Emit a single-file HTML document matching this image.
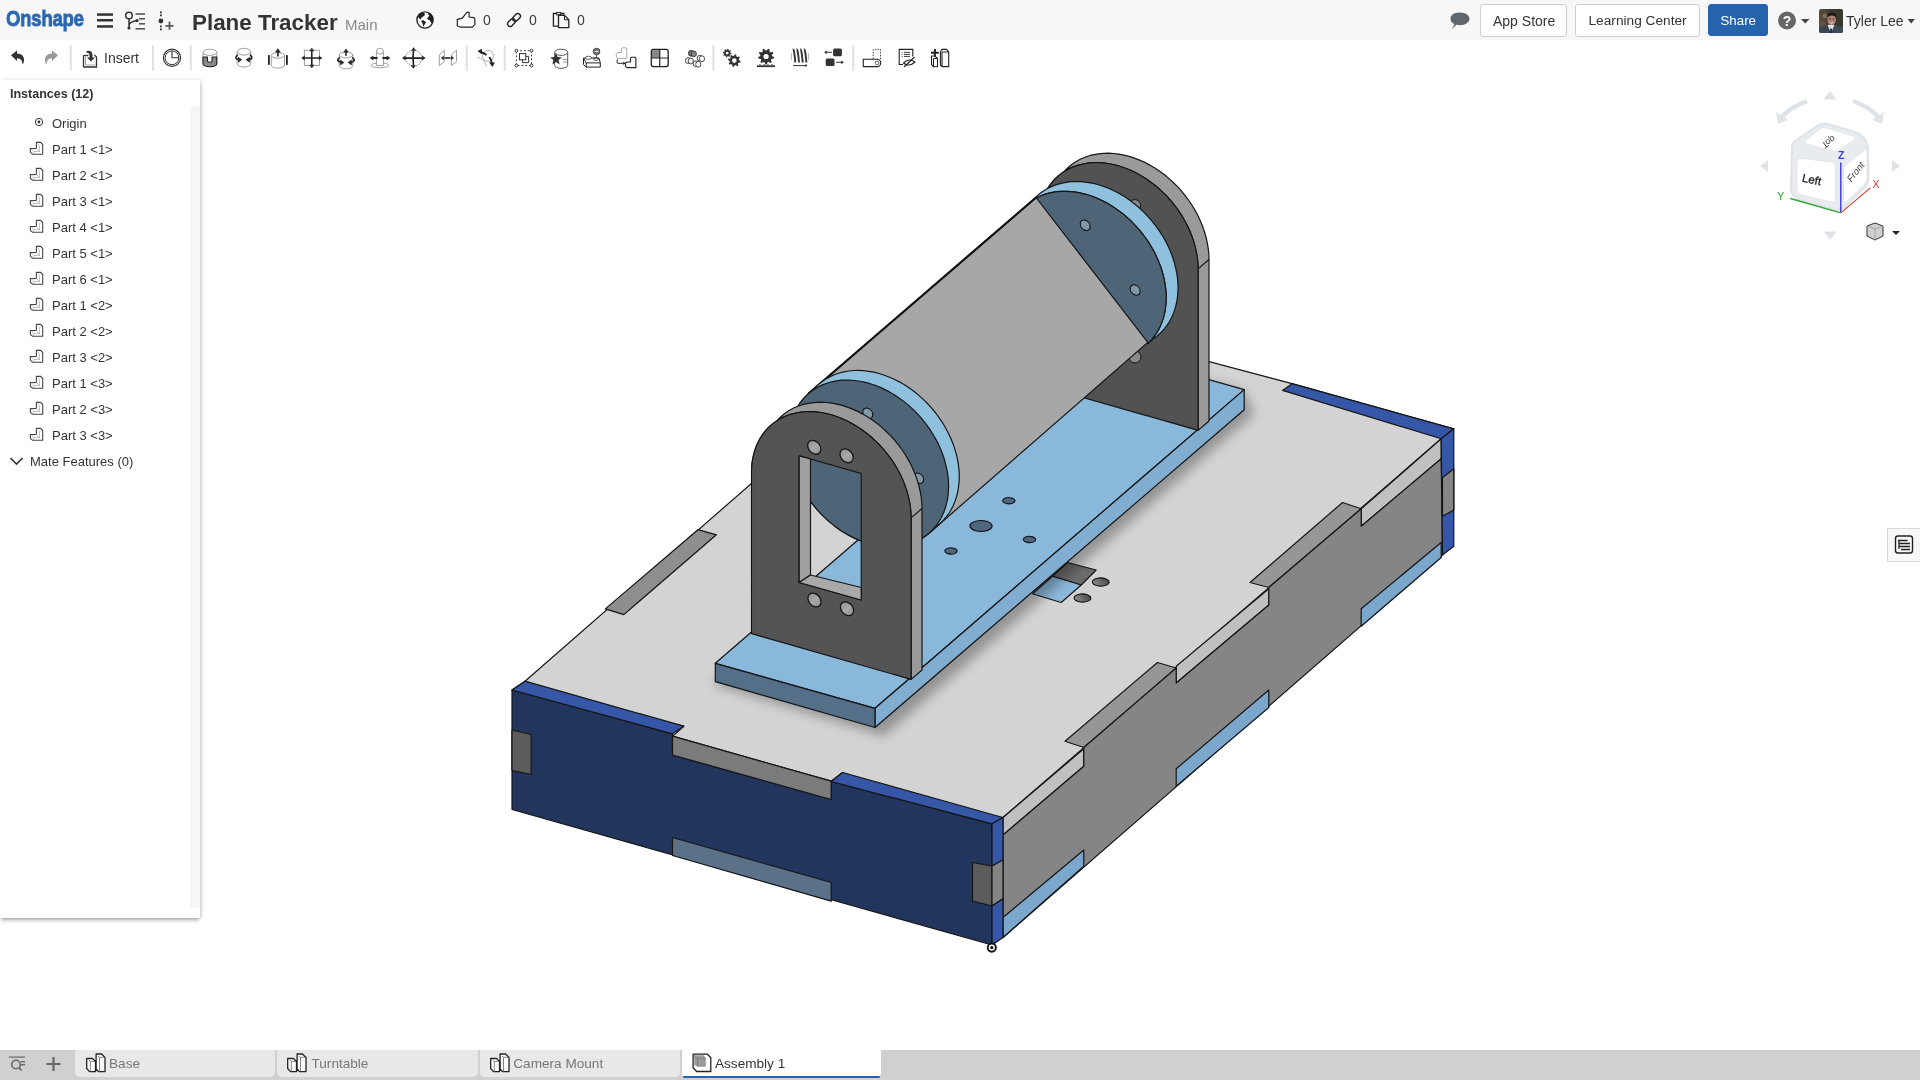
<!DOCTYPE html>
<html><head><meta charset="utf-8"><style>
*{margin:0;padding:0;box-sizing:border-box}
body{width:1920px;height:1080px;overflow:hidden;background:#fff;font-family:"Liberation Sans",sans-serif;position:relative;color:#333;-webkit-font-smoothing:antialiased}
.abs{will-change:transform}
.abs{position:absolute}
#hdr{left:0;top:0;width:1920px;height:40px;background:#f7f7f7}
#tb{left:0;top:40px;width:1920px;height:36px;background:#fff}
#panel{left:0;top:80px;width:200px;height:838px;background:#fff;box-shadow:0 3px 4px -1px rgba(0,0,0,0.32),2px 0 4px rgba(0,0,0,0.12)}
#tabs{left:0;top:1050px;width:1920px;height:30px;background:#d0d0d0}
.tab{position:absolute;top:0;height:27px;background:#e8e8e8;border-radius:0 0 5px 5px;font-size:13.6px;color:#777}
.tab span{position:absolute;top:6px}
.btn{position:absolute;top:3.5px;height:33px;background:#fff;border:1px solid #cfcfcf;border-radius:3px;font-size:14px;color:#333}
.btn span{position:absolute;top:8px}
.item{position:absolute;left:52px;font-size:13px;color:#333}
</style></head><body>
<div id="hdr" class="abs"><div class="abs" style="left:6px;top:6px;font-size:22.5px;font-weight:bold;color:#2b67b0;transform:scaleX(0.82);transform-origin:0 0;letter-spacing:-0.2px;-webkit-text-stroke:0.9px #2b67b0">Onshape</div>
<svg class="abs" style="left:0;top:0" width="1920" height="40"><rect x="97" y="13.3" width="16" height="2.5" fill="#333"/><rect x="97" y="19.0" width="16" height="2.5" fill="#333"/><rect x="97" y="25.2" width="16" height="2.5" fill="#333"/><circle cx="129" cy="15.5" r="3.3" fill="none" stroke="#333" stroke-width="1.5"/><path d="M129 18.8 V28 M129 26 Q129 22 137 20.6" fill="none" stroke="#333" stroke-width="1.5"/><circle cx="129" cy="28" r="1.6" fill="#333"/><circle cx="137" cy="20.6" r="1.6" fill="#333"/><rect x="135.5" y="13.2" width="9.5" height="1.6" fill="#555"/><rect x="139" y="18.0" width="6" height="1.6" fill="#555"/><rect x="139" y="23.0" width="6" height="1.6" fill="#555"/><rect x="135.5" y="28.0" width="9.5" height="1.6" fill="#555"/><rect x="160" y="11.5" width="1.8" height="1.8" fill="#333"/><rect x="160" y="14.5" width="1.8" height="1.8" fill="#333"/><rect x="160" y="25.5" width="1.8" height="1.8" fill="#333"/><rect x="160" y="28.5" width="1.8" height="1.8" fill="#333"/><circle cx="160.9" cy="21" r="2.4" fill="#333"/><path d="M165.5 25.8 H173.5 M169.5 21.8 V29.8" stroke="#555" stroke-width="1.8"/><circle cx="425" cy="20" r="8.1" fill="#fff" stroke="#222" stroke-width="1.4"/><path d="M417.6 16.2 L419.7 13.5 L422.1 12.3 L424.8 13.5 L424.6 15.5 L421.7 17.6 L420.7 19.4 L419.3 18.6 Z" fill="#222"/><path d="M421.5 20.4 L423.6 20.2 L426 22.2 L424.6 24.5 L423.4 26.9 L422.6 23.7 L421.3 21.6 Z" fill="#222"/><path d="M428.3 12.5 L431.3 13.9 L432.9 16.7 L433.3 19.2 L433 22.2 L431.9 23.7 L430.9 22.2 L429.9 20.4 L427.8 19.6 L427.2 18.2 L428.3 16.7 L429.5 15.9 L428.3 14.7 Z" fill="#222"/><path d="M457.3 19.4 L462.4 18.1 L466.6 12.7 Q468.2 11.6 469.2 12.8 L469 17 L473.8 17.6 Q474.9 18.2 474.8 19.2 V24.6 L472.3 27.2 H460.6 L457.3 25.7 Z" fill="#fff" stroke="#222" stroke-width="1.2" stroke-linejoin="round"/><g transform="translate(514,20) rotate(-45)"><rect x="-8" y="-2.6" width="8.8" height="5.2" rx="2.6" fill="none" stroke="#222" stroke-width="1.4"/><rect x="-0.8" y="-2.6" width="8.8" height="5.2" rx="2.6" fill="none" stroke="#222" stroke-width="1.4"/></g><path d="M553.4 13.5 H563.7 V26.2 H553.4 Z" fill="#f7f7f7" stroke="#222" stroke-width="1.3"/><rect x="556.6" y="12.6" width="4.2" height="2.2" fill="#f7f7f7" stroke="#222" stroke-width="1"/><path d="M558.5 15.4 H564.5 L568.8 19.8 V27.6 H558.5 Z" fill="#f7f7f7" stroke="#222" stroke-width="1.3" stroke-linejoin="round"/><path d="M564.5 15.4 V19.8 H568.8" fill="none" stroke="#222" stroke-width="1"/><path d="M1459.5 12.5 C1465.5 12.5 1469.5 15.3 1469.5 18.8 C1469.5 22.3 1465.5 25.2 1459.8 25.2 C1458.5 25.2 1457.5 25 1456.5 24.8 L1452 29 L1454.5 24 C1451.5 22.8 1450.5 21 1450.5 18.8 C1450.5 15.3 1453.8 12.5 1459.5 12.5 Z" fill="#60676d"/><circle cx="1787" cy="20.5" r="9" fill="#666"/><text x="1787" y="26" text-anchor="middle" font-family="Liberation Sans" font-weight="bold" font-size="14" fill="#fff">?</text><path d="M1801 19 H1809.5 L1805.25 23.5 Z" fill="#444"/><path d="M1907.5 19 H1915 L1911.25 23.5 Z" fill="#444"/><defs><clipPath id="avc"><rect x="1819" y="8.9" width="24" height="24" rx="2"/></clipPath><linearGradient id="avbg" x1="0" y1="0" x2="1" y2="0"><stop offset="0" stop-color="#5b4e3c"/><stop offset="0.5" stop-color="#3e3a2c"/><stop offset="1" stop-color="#35382e"/></linearGradient></defs><g clip-path="url(#avc)"><rect x="1819" y="8.9" width="24" height="24" fill="url(#avbg)"/><circle cx="1825" cy="16" r="2.5" fill="#8a7a66" opacity="0.7"/><circle cx="1823" cy="24" r="3" fill="#6e5a4a" opacity="0.6"/><path d="M1819 33 V27 Q1824 25.5 1827.5 25 L1831 33 Z" fill="#3b4650"/><path d="M1843 33 V27 Q1838 25.5 1834.5 25 L1831 33 Z" fill="#404a52"/><path d="M1827.5 25 L1831 33 L1834.5 25 Q1831 24 1827.5 25 Z" fill="#dfe4ea"/><path d="M1830.3 28.5 H1831.9 L1832.3 33 H1830 Z" fill="#1d2a55"/><ellipse cx="1831.6" cy="19.8" rx="4.3" ry="5.3" fill="#a88272"/><path d="M1827 17.5 Q1827 12.5 1831.8 12.5 Q1836.5 12.5 1836.3 17.5 Q1834.5 15.2 1831.8 15.4 Q1829 15.2 1827 17.5 Z" fill="#1e1710"/><rect x="1829" y="18.5" width="1.8" height="0.9" fill="#4a3028"/><rect x="1832.6" y="18.5" width="1.8" height="0.9" fill="#4a3028"/><path d="M1829.8 22.6 Q1831.6 23.8 1833.4 22.6" fill="none" stroke="#f0e6e0" stroke-width="0.8"/></g></svg>
<div class="abs" style="left:192px;top:9.5px;font-size:22.4px;font-weight:bold;color:#333">Plane Tracker</div>
<div class="abs" style="left:345px;top:15.5px;font-size:15px;color:#888">Main</div>
<div class="abs" style="left:482.5px;top:12px;font-size:14px;color:#3a3a3a">0</div>
<div class="abs" style="left:529px;top:12px;font-size:14px;color:#3a3a3a">0</div>
<div class="abs" style="left:577px;top:12px;font-size:14px;color:#3a3a3a">0</div>
<div class="btn" style="left:1480px;width:87px"><span style="left:12px">App Store</span></div>
<div class="btn" style="left:1575px;width:125px"><span style="left:12.5px;font-size:13.7px">Learning Center</span></div>
<div class="btn" style="left:1708px;width:60px;top:4px;height:32px;background:#2563ad;border-color:#2563ad;color:#fff"><span style="left:11.5px;top:8px;font-size:13.3px">Share</span></div>
<div class="abs" style="left:1846px;top:12.5px;font-size:14px;color:#333">Tyler Lee</div></div>
<div id="tb" class="abs"></div>
<svg class="abs" style="left:0;top:0" width="1920" height="80"><rect x="69.8" y="45" width="2" height="26" fill="#e2e2e2"/><rect x="152" y="45" width="2" height="26" fill="#e2e2e2"/><rect x="189.8" y="45" width="2" height="26" fill="#e2e2e2"/><rect x="465.8" y="45" width="2" height="26" fill="#e2e2e2"/><rect x="503.7" y="45" width="2" height="26" fill="#e2e2e2"/><rect x="712.3" y="45" width="2" height="26" fill="#e2e2e2"/><rect x="852.2" y="45" width="2" height="26" fill="#e2e2e2"/><path d="M11 55.3 L17 50.5 V53.5 Q24.5 53.5 24 61 Q23.7 63 22.5 64.5 Q22.3 58.3 17 58.3 V61 Z" fill="#333"/><path d="M58 55.3 L52 50.5 V53.5 Q44.5 53.5 45 61 Q45.3 63 46.5 64.5 Q46.7 58.3 52 58.3 V61 Z" fill="#999"/><path d="M83.5 55.5 V66.5 Q83.5 67 84 67 H96.5 V57 L94.5 55" fill="none" stroke="#333" stroke-width="1.3"/><path d="M83.5 55.5 H88.5" fill="none" stroke="#333" stroke-width="1.3"/><path d="M85.5 56 V65 H95" fill="none" stroke="#999" stroke-width="0.9"/><path d="M86.5 51 Q92.5 49.5 92.5 55.5 V57.5 H95 L91 61.5 L87 57.5 H89.5 V55.5 Q89.5 52.5 86.5 52.8 Z" fill="#333"/><circle cx="172" cy="57.8" r="8.6" fill="none" stroke="#333" stroke-width="1.2"/><circle cx="172" cy="57.8" r="6.9" fill="none" stroke="#333" stroke-width="1"/><path d="M172 50.9 V57.8 H178.9" fill="none" stroke="#333" stroke-width="1.1"/><path d="M203 52.3 V63.7 A6.9 3 0 0 0 216.8 63.7 V52.3" fill="#fff" stroke="#888" stroke-width="0.8"/><path d="M203 57 H207.5 V61 A2.25 1.2 0 0 0 212 61 V57 H216.8 V63.7 A6.9 3 0 0 1 203 63.7 Z" fill="#8a8a8a" stroke="#222" stroke-width="1.1" stroke-linejoin="round"/><ellipse cx="209.9" cy="52.3" rx="6.9" ry="3.1" fill="#fff" stroke="#888" stroke-width="0.8"/><path d="M237.1 51.7 V63.7 A6.8 3.3 0 0 0 250.7 63.7 V51.7" fill="#fff" stroke="#888" stroke-width="0.8"/><ellipse cx="243.9" cy="51.7" rx="6.8" ry="3.4" fill="#fff" stroke="#888" stroke-width="0.8"/><path d="M237.8 54.8 Q233 58.5 239.5 59.8 M250 54.8 Q254.8 58.5 248.3 59.8" fill="none" stroke="#222" stroke-width="1.7"/><polygon points="238.0,56.8 242.2,59.8 238.0,62.8" fill="#2b2b2b"/><polygon points="249.8,56.8 245.6,59.8 249.8,62.8" fill="#2b2b2b"/><path d="M271.3 55.4 V65.3 A6.6 2.8 0 0 0 284.5 65.3 V55.4" fill="#fff" stroke="#888" stroke-width="0.8"/><ellipse cx="277.9" cy="55.4" rx="6.6" ry="2.8" fill="#fff" stroke="#888" stroke-width="0.8"/><rect x="268" y="55.1" width="1.8" height="9.7" fill="#222"/><rect x="286" y="55.1" width="1.8" height="9.7" fill="#222"/><path d="M277.9 56.5 V51.5" stroke="#222" stroke-width="1.6"/><polygon points="274.9,52.4 277.9,48.2 280.9,52.4" fill="#2b2b2b"/><rect x="304.3" y="50.2" width="15.3" height="15.3" fill="none" stroke="#888" stroke-width="0.8"/><path d="M311.8 50.5 V65.5 M304.5 58 H319.5" stroke="#222" stroke-width="1.6"/><polygon points="309.2,51.3 311.8,47.7 314.4,51.3" fill="#2b2b2b"/><polygon points="309.2,64.7 311.8,68.3 314.4,64.7" fill="#2b2b2b"/><polygon points="304.8,55.4 301.2,58.0 304.8,60.6" fill="#2b2b2b"/><polygon points="318.8,55.4 322.4,58.0 318.8,60.6" fill="#2b2b2b"/><path d="M339.3 54.9 V65.8 A6.75 3 0 0 0 352.8 65.8 V54.9" fill="#fff" stroke="#888" stroke-width="0.8"/><ellipse cx="346" cy="54.9" rx="6.75" ry="3" fill="#fff" stroke="#888" stroke-width="0.8"/><path d="M346 55.8 V51.5" stroke="#222" stroke-width="1.6"/><polygon points="343.2,52.4 346.0,48.4 348.8,52.4" fill="#2b2b2b"/><path d="M339.8 57.3 Q335 61 341.5 62.5 M352.2 57.3 Q357 61 350.5 62.5" fill="none" stroke="#222" stroke-width="1.7"/><polygon points="340.2,59.5 344.4,62.5 340.2,65.5" fill="#2b2b2b"/><polygon points="351.8,59.5 347.6,62.5 351.8,65.5" fill="#2b2b2b"/><ellipse cx="380" cy="65.3" rx="8.8" ry="2.4" fill="#fff" stroke="#888" stroke-width="0.8"/><path d="M376.4 51.2 V65.5 H383.4 V51.2" fill="#fff" stroke="#888" stroke-width="0.8"/><ellipse cx="379.9" cy="51.2" rx="3.5" ry="3" fill="#fff" stroke="#888" stroke-width="0.8"/><path d="M373 58 H377.5 M382.5 58 H387" stroke="#222" stroke-width="1.8"/><polygon points="373.3,55.4 369.7,58.0 373.3,60.6" fill="#2b2b2b"/><polygon points="386.7,55.4 390.3,58.0 386.7,60.6" fill="#2b2b2b"/><circle cx="413.8" cy="58" r="8" fill="none" stroke="#666" stroke-width="0.8" stroke-dasharray="1.5,0.8"/><path d="M413.5 50.5 Q412.5 58 413.5 65.5 M405 58.2 Q414 57.5 422.5 58.2" fill="none" stroke="#222" stroke-width="1.7"/><polygon points="411.1,50.8 413.6,47.3 416.1,50.8" fill="#2b2b2b"/><polygon points="410.8,65.2 413.3,68.7 415.8,65.2" fill="#2b2b2b"/><polygon points="405.5,55.5 402.0,58.0 405.5,60.5" fill="#2b2b2b"/><polygon points="422.1,55.5 425.6,58.0 422.1,60.5" fill="#2b2b2b"/><path d="M439.3 65.8 V54.9 L444.3 50.2 V61.6 Z M451.3 65.8 V54.9 L456.5 50.2 V61.6 Z" fill="none" stroke="#888" stroke-width="0.8"/><path d="M444.5 58 H450.5" stroke="#222" stroke-width="1.6"/><polygon points="443.9,55.8 440.9,58.0 443.9,60.2" fill="#2b2b2b"/><polygon points="451.1,55.8 454.1,58.0 451.1,60.2" fill="#2b2b2b"/><circle cx="488" cy="55.9" r="5.5" fill="none" stroke="#999" stroke-width="0.8"/><path d="M477.5 57.3 Q484 58 486.5 66.5" fill="none" stroke="#999" stroke-width="0.8"/><path d="M486.5 55 Q483.5 52.5 480 52" fill="none" stroke="#222" stroke-width="1.8"/><polygon points="477.5,51 482,48.8 481.8,54.2" fill="#222"/><path d="M489.3 57 Q491.5 60 491.8 63" fill="none" stroke="#222" stroke-width="1.8"/><polygon points="489,62.5 494.8,62.5 492.5,67" fill="#222"/><rect x="516.4" y="50.7" width="15.1" height="14.8" fill="none" stroke="#333" stroke-width="1" stroke-dasharray="1.8,2"/><circle cx="516.4" cy="50.7" r="1.4" fill="#fff" stroke="#333" stroke-width="1"/><circle cx="531.5" cy="50.7" r="1.4" fill="#fff" stroke="#333" stroke-width="1"/><circle cx="516.4" cy="65.5" r="1.4" fill="#fff" stroke="#333" stroke-width="1"/><circle cx="531.5" cy="65.5" r="1.4" fill="#fff" stroke="#333" stroke-width="1"/><rect x="519.5" y="53.6" width="6.3" height="6.2" fill="#fff" stroke="#333" stroke-width="1"/><path d="M525.8 56.4 H528.6 V62.6 H522.4 V59.8" fill="none" stroke="#333" stroke-width="1"/><path d="M554.7 52.3 V65.3 A6.5 3 0 0 0 567.7 65.3 V52.3" fill="#fff" stroke="#444" stroke-width="0.9"/><ellipse cx="561.2" cy="52.3" rx="6.5" ry="3.1" fill="#fff" stroke="#444" stroke-width="0.9"/><path d="M563 59.5 H567.5 M563 62 H567.5" stroke="#666" stroke-width="0.7"/><polygon points="556.0,53.0 557.6,57.1 562.0,57.4 558.6,60.1 559.7,64.4 556.0,62.0 552.3,64.4 553.4,60.1 550.0,57.4 554.4,57.1" fill="#333"/><path d="M583.5 58 L586.2 62.9 H600.3 V67.1 H586.2 L583.5 64.5 Z M586.2 62.9 V67.1" fill="#fff" stroke="#222" stroke-width="1"/><path d="M583.5 58 H599 L600.3 62.9" fill="none" stroke="#222" stroke-width="1"/><ellipse cx="588.5" cy="57.8" rx="3" ry="1.6" fill="#fff" stroke="#333" stroke-width="0.8"/><ellipse cx="596" cy="59" rx="2.5" ry="1.4" fill="none" stroke="#333" stroke-width="0.8"/><circle cx="596.6" cy="51.5" r="3.3" fill="#777" stroke="#333" stroke-width="0.8"/><rect x="594.8" y="51" width="3.6" height="1" fill="#eee"/><path d="M596.6 54.8 V58" stroke="#333" stroke-width="0.8"/><path d="M616.3 53.5 L618 52.5 H621.5 V48.5 L622.5 47.8 H626 L626.8 49 V58.5 H618 L616.3 57 Z" fill="#fff" stroke="#aaa" stroke-width="1"/><path d="M625.5 63 L627 62 H630.5 V58 L631.5 57.3 H635 L635.9 58.5 V67.6 H627 L625.5 66.3 Z" fill="#fff" stroke="#222" stroke-width="1.1"/><path d="M617.2 59.3 V62.5 Q617.2 63.3 618 63.3 H623" fill="none" stroke="#222" stroke-width="1"/><polygon points="623.1,61.5 625.7,63.3 623.1,65.1" fill="#2b2b2b"/><rect x="651.3" y="49.4" width="16.9" height="17.2" rx="2" fill="#fff" stroke="#222" stroke-width="1.3"/><rect x="652" y="50.1" width="7.7" height="7.7" fill="#888"/><path d="M659.75 49.4 V66.6 M651.3 58 H668.2" stroke="#222" stroke-width="1.2"/><ellipse cx="691" cy="53.3" rx="2.6" ry="2.9" fill="#777" stroke="#333" stroke-width="0.9"/><ellipse cx="693.8" cy="53.8" rx="2.6" ry="2.9" fill="#888" stroke="#333" stroke-width="0.9"/><ellipse cx="688" cy="60.5" rx="2.6" ry="2.9" fill="#fff" stroke="#333" stroke-width="0.9"/><ellipse cx="690.8" cy="61" rx="2.6" ry="2.9" fill="#fff" stroke="#333" stroke-width="0.9"/><ellipse cx="699.8" cy="58.2" rx="2.6" ry="2.9" fill="#fff" stroke="#333" stroke-width="0.9"/><ellipse cx="702" cy="58.7" rx="2.6" ry="2.9" fill="#fff" stroke="#333" stroke-width="0.9"/><ellipse cx="695.8" cy="63.8" rx="2.6" ry="2.9" fill="#fff" stroke="#333" stroke-width="0.9"/><ellipse cx="698.3" cy="64.3" rx="2.6" ry="2.9" fill="#fff" stroke="#333" stroke-width="0.9"/><polygon points="731.5,53.5 731.3,54.3 730.0,54.6 729.7,55.1 729.9,56.4 729.2,56.9 728.1,56.1 727.5,56.3 726.8,57.4 726.0,57.2 725.7,55.9 725.2,55.6 723.9,55.8 723.4,55.1 724.2,54.0 724.0,53.4 722.9,52.7 723.1,51.9 724.4,51.6 724.7,51.1 724.5,49.8 725.2,49.3 726.3,50.1 726.9,49.9 727.6,48.8 728.4,49.0 728.7,50.3 729.2,50.6 730.5,50.4 731.0,51.1 730.2,52.2 730.4,52.8" fill="#333"/><circle cx="727.2" cy="53.1" r="1.4" fill="#fff"/><polygon points="740.6,61.2 740.3,62.4 738.4,62.8 737.9,63.6 738.3,65.5 737.3,66.2 735.7,65.1 734.8,65.2 733.7,66.9 732.5,66.6 732.1,64.7 731.3,64.2 729.4,64.6 728.7,63.6 729.8,62.0 729.7,61.1 728.0,60.0 728.3,58.8 730.2,58.4 730.7,57.6 730.3,55.7 731.3,55.0 732.9,56.1 733.8,56.0 734.9,54.3 736.1,54.6 736.5,56.5 737.3,57.0 739.2,56.6 739.9,57.6 738.8,59.2 738.9,60.1" fill="#333"/><circle cx="734.3" cy="60.6" r="2.3" fill="#fff"/><polygon points="774.1,57.2 773.8,58.6 771.5,59.0 770.9,59.9 771.8,62.2 770.7,63.1 768.6,61.9 767.6,62.2 766.8,64.5 765.4,64.5 764.6,62.2 763.6,61.9 761.5,63.1 760.4,62.2 761.3,59.9 760.7,59.0 758.4,58.6 758.1,57.2 760.2,56.0 760.4,55.0 758.8,53.1 759.5,51.9 761.9,52.3 762.7,51.7 762.7,49.2 764.0,48.8 765.6,50.6 766.6,50.6 768.2,48.8 769.5,49.2 769.5,51.7 770.3,52.3 772.7,51.9 773.4,53.1 771.8,55.0 772.0,56.0" fill="#333"/><circle cx="766.1" cy="56.5" r="2.6" fill="#fff"/><rect x="757" y="65.3" width="18" height="1.8" fill="#333"/><path d="M759 65.3 L760 63.8 L761 65.3 M763 65.3 L764 63.8 L765 65.3 M767 65.3 L768 63.8 L769 65.3 M771 65.3 L772 63.8 L773 65.3" fill="#333"/><path d="M791.5 53 V60 M808.5 53 V60" stroke="#999" stroke-width="0.7"/><path d="M792.8 49.5 Q794.3 49 795.3 62.5" fill="none" stroke="#333" stroke-width="1.9"/><path d="M796.5 49.5 Q798.0 49 799.0 62.5" fill="none" stroke="#333" stroke-width="1.9"/><path d="M800.2 49.5 Q801.7 49 802.7 62.5" fill="none" stroke="#333" stroke-width="1.9"/><path d="M803.9 49.5 Q805.4 49 806.4 62.5" fill="none" stroke="#333" stroke-width="1.9"/><path d="M793 65.6 H805" stroke="#333" stroke-width="1"/><polygon points="805.2,64.0 807.4,65.6 805.2,67.2" fill="#2b2b2b"/><rect x="833.1" y="48.4" width="8.8" height="7.8" rx="1.5" fill="#333"/><rect x="825.7" y="58.5" width="8.8" height="7.5" rx="1.5" fill="#333"/><path d="M827 52.3 H832 M836 62.3 H841" stroke="#333" stroke-width="1.1"/><polygon points="826.9,50.4 824.2,52.3 826.9,54.2" fill="#2b2b2b"/><polygon points="841.1,60.4 843.8,62.3 841.1,64.2" fill="#2b2b2b"/><path d="M863.3 59.3 H877.1 A3.6 3.65 0 0 1 877.1 66.6 H863.3 Z" fill="#fff" stroke="#222" stroke-width="1.1"/><path d="M873.2 59 V49.4 H880.5 V59.5" fill="none" stroke="#333" stroke-width="0.9" stroke-dasharray="1.5,1.3"/><circle cx="877.1" cy="62.9" r="1.9" fill="none" stroke="#555" stroke-width="0.9"/><path d="M912.8 56.5 V49.4 H899.2 V64.5 H903" fill="none" stroke="#222" stroke-width="1.1"/><path d="M904 52.3 H910 M904 54.4 H910 M904 56.4 H910" stroke="#222" stroke-width="0.9"/><circle cx="902.2" cy="52.3" r="0.5" fill="#222"/><circle cx="902.2" cy="54.4" r="0.5" fill="#222"/><circle cx="902.2" cy="56.4" r="0.5" fill="#222"/><path d="M903.5 63 Q909 57.5 915 62 Q909 67.5 903.5 63 Z" fill="none" stroke="#222" stroke-width="1.1"/><path d="M904 67 L914.5 57" stroke="#222" stroke-width="1.1"/><path d="M931.5 56 V64.5 L933.5 66.7 H937.5 V58.5 L935 56 Z M933.5 58.5 V66.7 M933.5 58.5 H937.5" fill="#fff" stroke="#222" stroke-width="1.1"/><path d="M940.4 52 L941.8 49.4 H946.5 L948.7 52 V66.6 H942 L940.4 65 Z M942 52 V66.6 M942 52 H948.7" fill="#fff" stroke="#222" stroke-width="1.1"/><path d="M931 52.8 H938.8 M934.9 48.9 V56.7" stroke="#222" stroke-width="2"/></svg><div class="abs" style="left:104px;top:50px;font-size:14px;color:#333">Insert</div>
<svg class="abs" style="left:0;top:0" width="1920" height="1080" viewBox="0 0 1920 1080">
<defs><filter id="blur" x="-20%" y="-20%" width="140%" height="140%"><feGaussianBlur stdDeviation="6"/></filter><filter id="blur2" x="-20%" y="-20%" width="140%" height="140%"><feGaussianBlur stdDeviation="3"/></filter><linearGradient id="holeg" x1="0" y1="0" x2="1" y2="1"><stop offset="0" stop-color="#9a9a9a"/><stop offset="1" stop-color="#3a3a3a"/></linearGradient><linearGradient id="holem" x1="0" y1="0" x2="1" y2="1"><stop offset="0" stop-color="#8a8a8a"/><stop offset="0.5" stop-color="#a8a8a8"/><stop offset="1" stop-color="#8e8e8e"/></linearGradient><radialGradient id="boltg" cx="0.45" cy="0.45" r="0.6"><stop offset="0" stop-color="#d8d8d8"/><stop offset="1" stop-color="#6a6a6a"/></radialGradient></defs>
<polygon points="512.0,690.0 525.0,681.2 965.0,297.0 1292.0,383.7 1453.8,428.8 1441.2,438.8 1003.0,817.5 992.0,823.8 842.5,772.5 831.2,781.2 672.5,736.2 683.8,726.2" fill="#d3d3d3" stroke="#151515" stroke-width="1.2" stroke-linejoin="round" />
<polygon points="605.3,608.9 697.9,529.7 716.4,534.8 623.8,614.6" fill="#8e8e8e" stroke="#151515" stroke-width="1.2" stroke-linejoin="round" />
<polygon points="1052.5,576.2 1067.5,562.5 1096.2,570.0 1081.2,585.0" fill="#6c6c6c" stroke="#151515" stroke-width="1.2" stroke-linejoin="round" />
<polygon points="1032.5,593.8 1052.5,576.2 1081.2,585.0 1061.2,602.5" fill="#8cb9da" stroke="#151515" stroke-width="1.2" stroke-linejoin="round" />
<circle r="7.6" fill="url(#holeg)" stroke="#111" stroke-width="1.1" vector-effect="non-scaling-stroke" transform="matrix(0.961,0.276,0.551,-0.470,1100.75,582)"/>
<circle r="7.6" fill="url(#holeg)" stroke="#111" stroke-width="1.1" vector-effect="non-scaling-stroke" transform="matrix(0.961,0.276,0.551,-0.470,1082.5,598)"/>
<polygon points="1282.6,390.4 1292.0,383.7 1453.8,428.8 1441.2,438.8" fill="#3656a8" stroke="#151515" stroke-width="1.2" stroke-linejoin="round" />
<polygon points="1441.2,438.8 1441.2,458.8 1361.2,526.2 1361.2,508.8" fill="#c0c0c0" stroke="#151515" stroke-width="1.2" stroke-linejoin="round" />
<polygon points="1268.8,588.8 1268.8,605.0 1176.2,683.0 1176.2,666.2" fill="#c0c0c0" stroke="#151515" stroke-width="1.2" stroke-linejoin="round" />
<polygon points="1083.8,748.8 1083.8,766.2 1003.0,835.0 1003.0,817.5" fill="#c0c0c0" stroke="#151515" stroke-width="1.2" stroke-linejoin="round" />
<polygon points="1342.5,502.5 1361.2,508.8 1268.8,587.5 1250.0,582.5" fill="#969696" stroke="#151515" stroke-width="1.2" stroke-linejoin="round" />
<polygon points="1157.5,662.5 1176.2,668.0 1083.8,747.5 1065.0,741.2" fill="#969696" stroke="#151515" stroke-width="1.2" stroke-linejoin="round" />
<polygon points="1441.2,458.8 1361.2,526.2 1361.2,508.8 1268.8,587.5 1268.8,605.0 1176.2,683.0 1176.2,668.0 1083.8,747.5 1083.8,766.2 1003.0,835.0 1003.0,937.5 1442.5,555.0" fill="#858585" stroke="#151515" stroke-width="1.2" stroke-linejoin="round" />
<polygon points="1003.0,917.5 1083.8,850.0 1083.8,866.2 1003.0,937.5" fill="#7aa7cb" stroke="#151515" stroke-width="1.2" stroke-linejoin="round" />
<polygon points="1176.2,768.8 1268.8,690.0 1268.8,707.5 1176.2,786.2" fill="#7aa7cb" stroke="#151515" stroke-width="1.2" stroke-linejoin="round" />
<polygon points="1361.2,608.8 1441.2,542.5 1441.2,557.5 1361.2,626.2" fill="#7aa7cb" stroke="#151515" stroke-width="1.2" stroke-linejoin="round" />
<polygon points="1441.2,438.8 1453.8,428.8 1453.8,546.2 1442.5,555.0" fill="#3656a8" stroke="#151515" stroke-width="1.2" stroke-linejoin="round" />
<polygon points="1442.5,477.5 1453.8,468.8 1453.8,510.0 1442.5,516.2" fill="#858585" stroke="#151515" stroke-width="1.2" stroke-linejoin="round" />
<polygon points="512.0,690.0 672.5,733.8 672.5,755.0 831.2,799.5 831.2,781.5 992.0,823.8 992.0,945.0 512.0,809.5" fill="#22355d" stroke="#151515" stroke-width="1.2" stroke-linejoin="round" />
<polygon points="672.5,736.2 831.2,781.2 831.2,799.5 672.5,755.0" fill="#7b7b7b" stroke="#151515" stroke-width="1.2" stroke-linejoin="round" />
<polygon points="672.5,837.5 831.2,882.5 831.2,901.2 672.5,855.5" fill="#5b7187" stroke="#151515" stroke-width="1.2" stroke-linejoin="round" />
<polygon points="512.0,690.0 525.0,681.2 683.8,726.2 672.5,733.8" fill="#3656a8" stroke="#151515" stroke-width="1.2" stroke-linejoin="round" />
<polygon points="831.2,781.5 842.5,772.5 1003.0,817.5 992.0,823.8" fill="#3656a8" stroke="#151515" stroke-width="1.2" stroke-linejoin="round" />
<polygon points="512.0,730.0 531.2,734.5 531.2,774.5 512.0,770.5" fill="#5c5c5c" stroke="#151515" stroke-width="1.2" stroke-linejoin="round" />
<polygon points="972.5,862.5 992.0,866.0 992.0,906.0 972.5,901.0" fill="#5c5c5c" stroke="#151515" stroke-width="1.2" stroke-linejoin="round" />
<polygon points="992.0,823.8 1003.0,817.5 1003.0,860.0 992.0,866.0" fill="#3656a8" stroke="#151515" stroke-width="1.2" stroke-linejoin="round" />
<polygon points="992.0,866.0 1003.0,860.0 1003.0,898.8 992.0,906.0" fill="#858585" stroke="#151515" stroke-width="1.2" stroke-linejoin="round" />
<polygon points="992.0,906.0 1003.0,898.8 1003.0,937.5 992.0,945.0" fill="#3656a8" stroke="#151515" stroke-width="1.2" stroke-linejoin="round" />
<circle cx="991.8" cy="947.6" r="4.1" fill="#fff" stroke="#111" stroke-width="1.9"/><circle cx="991.8" cy="947.6" r="1.6" fill="#111"/>
<polygon points="713.0,684.0 884.0,736.0 1254.0,414.0 1244.0,392.0 1090.0,350.0" fill="#000" opacity="0.30" filter="url(#blur)"/>
<polygon points="715.3,663.3 875.0,708.3 1244.2,389.6 1084.2,344.6" fill="#8ab8da" stroke="#151515" stroke-width="1.2" stroke-linejoin="round" />
<polygon points="875.0,708.3 1244.2,389.6 1244.2,409.7 875.0,727.5" fill="#80add0" stroke="#151515" stroke-width="1.2" stroke-linejoin="round" />
<polygon points="715.3,663.3 875.0,708.3 875.0,727.5 715.3,681.7" fill="#546f87" stroke="#151515" stroke-width="1.2" stroke-linejoin="round" />
<circle r="5.6" fill="#4c677e" stroke="#111" stroke-width="1.1" vector-effect="non-scaling-stroke" transform="matrix(0.961,0.276,0.551,-0.470,1008.8,500.7)"/>
<circle r="10" fill="#4c677e" stroke="#111" stroke-width="1.1" vector-effect="non-scaling-stroke" transform="matrix(0.961,0.276,0.551,-0.470,981,526)"/>
<circle r="5.6" fill="#4c677e" stroke="#111" stroke-width="1.1" vector-effect="non-scaling-stroke" transform="matrix(0.961,0.276,0.551,-0.470,1029.5,539.5)"/>
<circle r="5.6" fill="#4c677e" stroke="#111" stroke-width="1.1" vector-effect="non-scaling-stroke" transform="matrix(0.961,0.276,0.551,-0.470,951,551)"/>
<polygon points="1198.1,430.4 1209.0,421.0 1209.0,259.5 1209.0,259.5 1208.8,254.2 1208.3,248.8 1207.4,243.4 1206.2,238.0 1204.7,232.5 1202.9,227.1 1200.7,221.7 1198.3,216.3 1195.5,211.1 1192.5,206.0 1189.2,201.0 1185.6,196.1 1181.8,191.4 1177.8,186.9 1173.5,182.7 1169.1,178.6 1164.5,174.8 1159.7,171.3 1154.8,168.0 1149.8,165.1 1144.8,162.4 1139.6,160.1 1134.4,158.1 1129.2,156.4 1124.0,155.1 1118.8,154.1 1113.6,153.5 1108.6,153.2 1103.6,153.3 1098.7,153.8 1093.9,154.6 1089.3,155.7 1084.9,157.2 1080.6,159.0 1076.6,161.2 1072.8,163.7 1069.2,166.5 1065.9,169.6 1062.9,173.0 1060.1,176.7 1057.7,180.6 1055.5,184.8 1053.7,189.1 1052.2,193.7 1051.0,198.5 1050.1,203.4 1049.6,208.5 1049.4,213.7 1049.4,213.7 1038.5,223.1 1038.5,223.1 1038.7,217.9 1039.2,212.8 1040.1,207.9 1041.3,203.1 1042.8,198.5 1044.6,194.2 1046.8,190.0 1049.2,186.1 1052.0,182.4 1055.0,179.0 1058.3,175.9 1061.9,173.1 1065.7,170.6 1069.7,168.4 1074.0,166.6 1078.4,165.1 1083.0,164.0 1087.8,163.2 1092.7,162.7 1097.7,162.6 1102.7,162.9 1107.9,163.5 1113.1,164.5 1118.3,165.8 1123.5,167.5 1128.7,169.5 1133.9,171.8 1138.9,174.5 1143.9,177.4 1148.8,180.7 1153.6,184.2 1158.2,188.0 1162.6,192.1 1166.9,196.3 1170.9,200.8 1174.7,205.5 1178.3,210.4 1181.6,215.4 1184.6,220.5 1187.4,225.7 1189.8,231.1 1192.0,236.5 1193.8,241.9 1195.3,247.4 1196.5,252.8 1197.4,258.2 1197.9,263.6 1198.1,268.9 1198.1,268.9" fill="#9a9a9a" stroke="#151515" stroke-width="1.2" stroke-linejoin="round" />
<line x1="1198.1" y1="268.9" x2="1209.0" y2="259.5" stroke="#111" stroke-width="1.1"/>
<polygon points="1038.5,384.6 1198.1,430.4 1198.1,268.9 1198.1,268.9 1197.9,263.6 1197.4,258.2 1196.5,252.8 1195.3,247.4 1193.8,241.9 1192.0,236.5 1189.8,231.1 1187.4,225.7 1184.6,220.5 1181.6,215.4 1178.3,210.4 1174.7,205.5 1170.9,200.8 1166.9,196.3 1162.6,192.1 1158.2,188.0 1153.6,184.2 1148.8,180.7 1143.9,177.4 1138.9,174.5 1133.9,171.8 1128.7,169.5 1123.5,167.5 1118.3,165.8 1113.1,164.5 1107.9,163.5 1102.7,162.9 1097.7,162.6 1092.7,162.7 1087.8,163.2 1083.0,164.0 1078.4,165.1 1074.0,166.6 1069.7,168.4 1065.7,170.6 1061.9,173.1 1058.3,175.9 1055.0,179.0 1052.0,182.4 1049.2,186.1 1046.8,190.0 1044.6,194.2 1042.8,198.5 1041.3,203.1 1040.1,207.9 1039.2,212.8 1038.7,217.9 1038.5,223.1 1038.5,223.1" fill="#525252" stroke="#151515" stroke-width="1.2" stroke-linejoin="round" />
<circle cx="1135" cy="357" r="6" fill="#8a8a8a" stroke="#111" stroke-width="1"/>
<circle cx="1134.8" cy="205.4" r="5.8" fill="#8a8a8a" stroke="#111" stroke-width="1"/>
<polygon points="1036.1,196.9 1039.6,193.8 1043.4,191.0 1047.5,188.5 1051.8,186.4 1056.3,184.7 1061.1,183.3 1066.0,182.3 1071.0,181.7 1076.2,181.5 1081.4,181.7 1086.8,182.3 1092.2,183.2 1097.7,184.5 1103.1,186.2 1108.5,188.3 1113.9,190.7 1119.2,193.5 1124.4,196.6 1129.5,200.0 1134.4,203.8 1139.2,207.8 1143.7,212.1 1148.1,216.6 1152.2,221.3 1156.1,226.3 1159.7,231.4 1163.1,236.7 1166.1,242.1 1168.8,247.6 1171.2,253.2 1173.2,258.9 1174.9,264.6 1176.2,270.3 1177.2,275.9 1177.8,281.5 1178.1,287.1 1177.9,292.5 1177.4,297.8 1176.5,303.0 1175.3,307.9 1173.7,312.7 1171.8,317.2 1169.5,321.5 1166.8,325.6 1163.9,329.3 1160.7,332.8 1157.1,335.9 1153.3,338.8 1147.9,343.5 1150.9,340.4 1153.6,337.2 1156.1,333.7 1158.4,329.9 1160.3,326.0 1162.0,321.9 1163.5,317.6 1164.6,313.1 1165.4,308.5 1165.9,303.7 1166.2,298.9 1166.1,293.9 1165.7,288.9 1165.0,283.9 1164.1,278.8 1162.8,273.7 1161.3,268.5 1159.4,263.4 1157.3,258.4 1155.0,253.4 1152.3,248.5 1149.5,243.7 1146.3,239.0 1143.0,234.5 1139.4,230.1 1135.7,225.8 1131.8,221.8 1127.6,217.9 1123.4,214.3 1119.0,210.9 1114.4,207.7 1109.8,204.8 1105.1,202.1 1100.3,199.7 1095.5,197.6 1090.6,195.8 1085.7,194.3 1080.8,193.1 1075.9,192.2 1071.1,191.6 1066.3,191.3 1061.6,191.4 1057.0,191.7 1052.5,192.4 1048.2,193.4 1043.9,194.6 1039.9,196.2 1036.0,198.1" fill="#8fc0dd" stroke="#151515" stroke-width="1.2" stroke-linejoin="round" />
<polygon points="1036.0,198.1 1039.9,196.2 1043.9,194.6 1048.2,193.4 1052.5,192.4 1057.0,191.7 1061.6,191.4 1066.3,191.3 1071.1,191.6 1075.9,192.2 1080.8,193.1 1085.7,194.3 1090.6,195.8 1095.5,197.6 1100.3,199.7 1105.1,202.1 1109.8,204.8 1114.4,207.7 1119.0,210.9 1123.4,214.3 1127.6,217.9 1131.8,221.8 1135.7,225.8 1139.4,230.1 1143.0,234.5 1146.3,239.0 1149.5,243.7 1152.3,248.5 1155.0,253.4 1157.3,258.4 1159.4,263.4 1161.3,268.5 1162.8,273.7 1164.1,278.8 1165.0,283.9 1165.7,288.9 1166.1,293.9 1166.2,298.9 1165.9,303.7 1165.4,308.5 1164.6,313.1 1163.5,317.6 1162.0,321.9 1160.3,326.0 1158.4,329.9 1156.1,333.7 1153.6,337.2 1150.9,340.4 1147.9,343.5" fill="#4e6577" stroke="#151515" stroke-width="1.2" stroke-linejoin="round" />
<circle r="5.2" fill="#7f99ab" stroke="#111" stroke-width="1.1" vector-effect="non-scaling-stroke" transform="matrix(0.961,0.276,0,0.966,1085.2,225.2)"/>
<circle r="5.2" fill="#7f99ab" stroke="#111" stroke-width="1.1" vector-effect="non-scaling-stroke" transform="matrix(0.961,0.276,0,0.966,1135.2,290)"/>
<polygon points="808.6,393.5 1036.0,197.5 1147.8,342.4 929.0,533.3" fill="#a7a7a7" stroke="#151515" stroke-width="1.2" stroke-linejoin="round" />
<line x1="808.6" y1="393.5" x2="1036.0" y2="197.5" stroke="#111" stroke-width="2.2"/>
<polygon points="819.3,383.9 822.9,381.1 826.6,378.6 830.7,376.4 834.9,374.5 839.3,373.0 843.9,371.8 848.7,371.0 853.5,370.5 858.5,370.4 863.6,370.7 868.7,371.3 873.9,372.2 879.2,373.5 884.4,375.2 889.6,377.2 894.7,379.5 899.8,382.1 904.8,385.0 909.7,388.3 914.5,391.8 919.1,395.6 923.5,399.6 927.8,403.8 931.8,408.3 935.7,413.0 939.2,417.8 942.6,422.8 945.6,428.0 948.4,433.2 950.9,438.5 953.1,443.9 954.9,449.4 956.5,454.8 957.7,460.3 958.5,465.7 959.1,471.1 959.3,476.4 959.1,481.6 958.6,486.6 957.8,491.6 956.6,496.4 955.1,501.0 953.3,505.4 951.2,509.5 948.8,513.5 946.0,517.2 943.0,520.6 939.7,523.7 929.0,533.3 925.4,536.1 921.7,538.6 917.6,540.8 913.4,542.7 909.0,544.2 904.4,545.4 899.6,546.2 894.8,546.7 889.8,546.8 884.7,546.5 879.6,545.9 874.4,545.0 869.1,543.7 863.9,542.0 858.7,540.0 853.6,537.7 848.5,535.1 843.5,532.2 838.6,528.9 833.8,525.4 829.2,521.6 824.8,517.6 820.5,513.4 816.5,508.9 812.6,504.2 809.1,499.4 805.7,494.4 802.7,489.2 799.9,484.0 797.4,478.7 795.2,473.3 793.4,467.8 791.8,462.4 790.6,456.9 789.8,451.5 789.2,446.1 789.0,440.8 789.2,435.6 789.7,430.6 790.5,425.6 791.7,420.8 793.2,416.2 795.0,411.8 797.1,407.7 799.5,403.7 802.3,400.0 805.3,396.6 808.6,393.5" fill="#8fc0dd" stroke="#151515" stroke-width="1.2" stroke-linejoin="round" />
<polygon points="948.6,486.3 948.3,479.2 947.4,472.0 945.8,464.8 943.8,457.5 941.1,450.3 937.9,443.1 934.1,436.2 929.9,429.4 925.2,422.9 920.1,416.7 914.6,410.9 908.7,405.4 902.5,400.4 896.1,395.9 889.4,391.9 882.7,388.4 875.8,385.5 868.8,383.2 861.8,381.5 854.9,380.5 848.2,380.0 841.5,380.2 835.1,381.1 828.9,382.5 823.0,384.6 817.5,387.3 812.4,390.5 807.7,394.3 803.5,398.6 799.7,403.5 796.5,408.8 793.8,414.5 791.8,420.5 790.2,426.9 789.3,433.6 789.0,440.5 789.3,447.6 790.2,454.8 791.8,462.0 793.8,469.3 796.5,476.5 799.7,483.7 803.5,490.6 807.7,497.4 812.4,503.9 817.5,510.1 823.0,515.9 828.9,521.4 835.1,526.4 841.5,530.9 848.2,534.9 854.9,538.4 861.8,541.3 868.8,543.6 875.8,545.3 882.7,546.3 889.4,546.8 896.1,546.6 902.5,545.7 908.7,544.3 914.6,542.2 920.1,539.5 925.2,536.3 929.9,532.5 934.1,528.2 937.9,523.3 941.1,518.0 943.8,512.3 945.8,506.3 947.4,499.9 948.3,493.2 948.6,486.3" fill="#4e6577" stroke="#151515" stroke-width="1.2" stroke-linejoin="round" />
<circle r="5.2" fill="#7f99ab" stroke="#111" stroke-width="1.1" vector-effect="non-scaling-stroke" transform="matrix(0.961,0.276,0,0.966,867.8,413.3)"/>
<circle r="5.2" fill="#7f99ab" stroke="#111" stroke-width="1.1" vector-effect="non-scaling-stroke" transform="matrix(0.961,0.276,0,0.966,918.6,478.2)"/>
<polygon points="911.1,679.4 922.0,670.0 922.0,508.5 922.0,508.5 921.8,503.2 921.3,497.8 920.4,492.4 919.2,487.0 917.7,481.5 915.9,476.1 913.7,470.7 911.3,465.3 908.5,460.1 905.5,455.0 902.2,450.0 898.6,445.1 894.8,440.4 890.8,435.9 886.5,431.7 882.1,427.6 877.5,423.8 872.7,420.3 867.8,417.0 862.8,414.1 857.8,411.4 852.6,409.1 847.4,407.1 842.2,405.4 837.0,404.1 831.8,403.1 826.6,402.5 821.6,402.2 816.6,402.3 811.7,402.8 806.9,403.6 802.3,404.7 797.9,406.2 793.6,408.0 789.6,410.2 785.8,412.7 782.2,415.5 778.9,418.6 775.9,422.0 773.1,425.7 770.7,429.6 768.5,433.8 766.7,438.1 765.2,442.7 764.0,447.5 763.1,452.4 762.6,457.5 762.4,462.7 762.4,462.7 751.5,472.1 751.5,472.1 751.7,466.9 752.2,461.8 753.1,456.9 754.3,452.1 755.8,447.5 757.6,443.2 759.8,439.0 762.2,435.1 765.0,431.4 768.0,428.0 771.3,424.9 774.9,422.1 778.7,419.6 782.7,417.4 787.0,415.6 791.4,414.1 796.0,413.0 800.8,412.2 805.7,411.7 810.7,411.6 815.7,411.9 820.9,412.5 826.1,413.5 831.3,414.8 836.5,416.5 841.7,418.5 846.9,420.8 851.9,423.5 856.9,426.4 861.8,429.7 866.6,433.2 871.2,437.0 875.6,441.1 879.9,445.3 883.9,449.8 887.7,454.5 891.3,459.4 894.6,464.4 897.6,469.5 900.4,474.7 902.8,480.1 905.0,485.5 906.8,490.9 908.3,496.4 909.5,501.8 910.4,507.2 910.9,512.6 911.1,517.9 911.1,517.9" fill="#9a9a9a" stroke="#151515" stroke-width="1.2" stroke-linejoin="round" />
<line x1="911.1" y1="517.9" x2="922.0" y2="508.5" stroke="#111" stroke-width="1.1"/>
<path d="M751.5,633.6 L911.1,679.4 L911.1,517.9 L911.1,517.9 L910.9,512.6 L910.4,507.2 L909.5,501.8 L908.3,496.4 L906.8,490.9 L905.0,485.5 L902.8,480.1 L900.4,474.7 L897.6,469.5 L894.6,464.4 L891.3,459.4 L887.7,454.5 L883.9,449.8 L879.9,445.3 L875.6,441.1 L871.2,437.0 L866.6,433.2 L861.8,429.7 L856.9,426.4 L851.9,423.5 L846.9,420.8 L841.7,418.5 L836.5,416.5 L831.3,414.8 L826.1,413.5 L820.9,412.5 L815.7,411.9 L810.7,411.6 L805.7,411.7 L800.8,412.2 L796.0,413.0 L791.4,414.1 L787.0,415.6 L782.7,417.4 L778.7,419.6 L774.9,422.1 L771.3,424.9 L768.0,428.0 L765.0,431.4 L762.2,435.1 L759.8,439.0 L757.6,443.2 L755.8,447.5 L754.3,452.1 L753.1,456.9 L752.2,461.8 L751.7,466.9 L751.5,472.1 L751.5,472.1 Z M799.2,582.5 L861.2,600.0 L861.2,473.5 L799.2,455.8 Z" fill="#545454" fill-rule="evenodd" stroke="#111" stroke-width="1.1" stroke-linejoin="round"/>
<polygon points="799.2,455.8 810.5,458.8 810.5,575.0 799.2,582.5" fill="#a0a0a0" stroke="#151515" stroke-width="1.2" stroke-linejoin="round" />
<polygon points="799.2,582.5 810.5,575.0 861.2,587.5 861.2,600.0" fill="#a8a8a8" stroke="#151515" stroke-width="1.2" stroke-linejoin="round" />
<circle r="6.9" fill="url(#holem)" stroke="#151515" stroke-width="1.3" vector-effect="non-scaling-stroke" transform="matrix(0.961,0.276,0,0.966,814.3,447.3)"/>
<circle r="6.9" fill="url(#holem)" stroke="#151515" stroke-width="1.3" vector-effect="non-scaling-stroke" transform="matrix(0.961,0.276,0,0.966,846.6,455.8)"/>
<circle r="6.9" fill="url(#holem)" stroke="#151515" stroke-width="1.3" vector-effect="non-scaling-stroke" transform="matrix(0.961,0.276,0,0.966,814.5,600)"/>
<circle r="6.9" fill="url(#holem)" stroke="#151515" stroke-width="1.3" vector-effect="non-scaling-stroke" transform="matrix(0.961,0.276,0,0.966,847,608.7)"/>
<path d="M1830 91 L1823.5 99.5 H1836.5 Z M1830 240 L1823.5 231.5 H1836.5 Z M1760 166 L1768 160 V172 Z M1900 166 L1892 160 V172 Z" fill="#dfe2e6"/>
<path d="M1807 101 Q1790 107 1781 118" fill="none" stroke="#dfe2e6" stroke-width="4.5"/><path d="M1776 112 L1778 124 L1788 120 Z" fill="#dfe2e6"/>
<path d="M1853 101 Q1870 107 1879 118" fill="none" stroke="#dfe2e6" stroke-width="4.5"/><path d="M1884 112 L1882 124 L1872 120 Z" fill="#dfe2e6"/>
<path d="M1792 150 Q1791 145 1795 141 L1817 126 Q1822 123 1828 124 L1855 132 Q1866 136 1868 147 L1868.5 179 Q1868 185 1863 189 L1847 205 Q1841 212 1832 209 L1800 200 Q1791 196 1791 189 Z" fill="#e9ecef" stroke="#dfe3e7" stroke-width="2"/>
<path d="M1800 158 Q1797 158 1797 162 V190 Q1797 194 1801 195 L1831 202 Q1835.5 203 1835.5 199 V167 Q1835.5 163 1831 162 Z" fill="#fff" stroke="#e3e6ea" stroke-width="1"/>
<path d="M1846 165 Q1843.5 166.5 1843.5 170 V199 Q1843.5 204 1847 201 L1864 185 Q1867 182 1867 178 V152 Q1867 148 1864 150.5 Z" fill="#fff" stroke="#e3e6ea" stroke-width="1"/>
<path d="M1806 140 Q1803 142 1806 144 L1832 151 Q1836 152 1839 150 L1854 140 Q1857 137 1853 136 L1827 128 Q1823 127 1820 129 Z" fill="#fff" stroke="#e3e6ea" stroke-width="1"/>
<text transform="translate(1801.5,181.5) rotate(12)" font-family="Liberation Sans" font-size="11.5" fill="#222" stroke="#222" stroke-width="0.3">Left</text>
<text transform="translate(1851,183) rotate(-52) skewX(-12)" font-family="Liberation Sans" font-size="9.5" fill="#444">Front</text>
<text transform="translate(1821,144) rotate(-38) scale(1,-1)" font-family="Liberation Sans" font-size="9" fill="#333">Top</text>
<path d="M1840.8 212.8 V162.4" stroke="#3a3ad0" stroke-width="1.4"/>
<path d="M1840.8 212.8 L1790.4 198.5" stroke="#2ea52e" stroke-width="1.3"/>
<path d="M1840.8 212.8 L1870.3 187.8" stroke="#d8372a" stroke-width="1.1"/>
<text x="1841.3" y="159.2" text-anchor="middle" font-family="Liberation Sans" font-weight="bold" font-size="10.5" fill="#3a3ad0">Z</text>
<text x="1780.7" y="199.5" text-anchor="middle" font-family="Liberation Sans" font-size="10.5" fill="#2ea52e">Y</text>
<text x="1876" y="188.3" text-anchor="middle" font-family="Liberation Sans" font-size="10.5" fill="#d8372a">X</text>
<path d="M1867 226 L1875 223 L1883 226 V236 L1875 240 L1867 236 Z" fill="#d0d0d0" stroke="#333" stroke-width="1"/>
<path d="M1867 226 L1875 229 L1883 226 M1875 229 V240" fill="none" stroke="#999" stroke-width="0.8"/>
<path d="M1892 231 H1900 L1896 235 Z" fill="#222"/>
<rect x="1887.5" y="528.5" width="40" height="33" fill="#f8f8f8" stroke="#d8d8d8" stroke-width="1"/>
<rect x="1895.5" y="536" width="17" height="17" rx="2.5" fill="none" stroke="#222" stroke-width="1.4"/>
<path d="M1898 540.5 H1907.5 M1899 540.5 V549 M1901 543.5 H1910 M1901 546.5 H1910 M1901 549.5 H1910 M1899 543.5 H1901 M1899 546.5 H1901" stroke="#222" stroke-width="1.3"/>
</svg>
<div id="panel" class="abs"><div class="abs" style="left:10px;top:6.5px;font-size:12.5px;font-weight:bold;color:#333">Instances (12)</div>
<div class="item" style="top:36px">Origin</div>
<div class="item" style="top:62px">Part 1 &lt;1&gt;</div>
<div class="item" style="top:88px">Part 2 &lt;1&gt;</div>
<div class="item" style="top:114px">Part 3 &lt;1&gt;</div>
<div class="item" style="top:140px">Part 4 &lt;1&gt;</div>
<div class="item" style="top:166px">Part 5 &lt;1&gt;</div>
<div class="item" style="top:192px">Part 6 &lt;1&gt;</div>
<div class="item" style="top:218px">Part 1 &lt;2&gt;</div>
<div class="item" style="top:244px">Part 2 &lt;2&gt;</div>
<div class="item" style="top:270px">Part 3 &lt;2&gt;</div>
<div class="item" style="top:296px">Part 1 &lt;3&gt;</div>
<div class="item" style="top:322px">Part 2 &lt;3&gt;</div>
<div class="item" style="top:348px">Part 3 &lt;3&gt;</div>
<div class="abs" style="left:29.5px;top:374px;font-size:13px;color:#333">Mate Features (0)</div>
<svg class="abs" style="left:0;top:0" width="200" height="838"><circle cx="39" cy="42" r="3.7" fill="none" stroke="#333" stroke-width="1"/><circle cx="39" cy="42" r="1.4" fill="#333"/><path d="M30.3 68.6 L36.4 68.4 V62.4 H40.6 L42.7 64.5 V74.3 H32.7 L30.4 72.4 Z" fill="#fff" stroke="#444" stroke-width="1.1" stroke-linejoin="round"/><path d="M32.3 70.2 L33.6 71.5 H39.5 V65.4 L38.2 64.1 M33.6 71.5 V73.9 M36.4 68.4 L39.5 71.5" fill="none" stroke="#aaa" stroke-width="0.7"/><path d="M30.3 94.6 L36.4 94.4 V88.4 H40.6 L42.7 90.5 V100.3 H32.7 L30.4 98.4 Z" fill="#fff" stroke="#444" stroke-width="1.1" stroke-linejoin="round"/><path d="M32.3 96.2 L33.6 97.5 H39.5 V91.4 L38.2 90.1 M33.6 97.5 V99.9 M36.4 94.4 L39.5 97.5" fill="none" stroke="#aaa" stroke-width="0.7"/><path d="M30.3 120.6 L36.4 120.4 V114.4 H40.6 L42.7 116.5 V126.3 H32.7 L30.4 124.4 Z" fill="#fff" stroke="#444" stroke-width="1.1" stroke-linejoin="round"/><path d="M32.3 122.2 L33.6 123.5 H39.5 V117.4 L38.2 116.1 M33.6 123.5 V125.9 M36.4 120.4 L39.5 123.5" fill="none" stroke="#aaa" stroke-width="0.7"/><path d="M30.3 146.6 L36.4 146.4 V140.4 H40.6 L42.7 142.5 V152.3 H32.7 L30.4 150.4 Z" fill="#fff" stroke="#444" stroke-width="1.1" stroke-linejoin="round"/><path d="M32.3 148.2 L33.6 149.5 H39.5 V143.4 L38.2 142.1 M33.6 149.5 V151.9 M36.4 146.4 L39.5 149.5" fill="none" stroke="#aaa" stroke-width="0.7"/><path d="M30.3 172.6 L36.4 172.4 V166.4 H40.6 L42.7 168.5 V178.3 H32.7 L30.4 176.4 Z" fill="#fff" stroke="#444" stroke-width="1.1" stroke-linejoin="round"/><path d="M32.3 174.2 L33.6 175.5 H39.5 V169.4 L38.2 168.1 M33.6 175.5 V177.9 M36.4 172.4 L39.5 175.5" fill="none" stroke="#aaa" stroke-width="0.7"/><path d="M30.3 198.6 L36.4 198.4 V192.4 H40.6 L42.7 194.5 V204.3 H32.7 L30.4 202.4 Z" fill="#fff" stroke="#444" stroke-width="1.1" stroke-linejoin="round"/><path d="M32.3 200.2 L33.6 201.5 H39.5 V195.4 L38.2 194.1 M33.6 201.5 V203.9 M36.4 198.4 L39.5 201.5" fill="none" stroke="#aaa" stroke-width="0.7"/><path d="M30.3 224.6 L36.4 224.4 V218.4 H40.6 L42.7 220.5 V230.3 H32.7 L30.4 228.4 Z" fill="#fff" stroke="#444" stroke-width="1.1" stroke-linejoin="round"/><path d="M32.3 226.2 L33.6 227.5 H39.5 V221.4 L38.2 220.1 M33.6 227.5 V229.9 M36.4 224.4 L39.5 227.5" fill="none" stroke="#aaa" stroke-width="0.7"/><path d="M30.3 250.6 L36.4 250.4 V244.4 H40.6 L42.7 246.5 V256.3 H32.7 L30.4 254.4 Z" fill="#fff" stroke="#444" stroke-width="1.1" stroke-linejoin="round"/><path d="M32.3 252.2 L33.6 253.5 H39.5 V247.4 L38.2 246.1 M33.6 253.5 V255.9 M36.4 250.4 L39.5 253.5" fill="none" stroke="#aaa" stroke-width="0.7"/><path d="M30.3 276.6 L36.4 276.4 V270.4 H40.6 L42.7 272.5 V282.3 H32.7 L30.4 280.4 Z" fill="#fff" stroke="#444" stroke-width="1.1" stroke-linejoin="round"/><path d="M32.3 278.2 L33.6 279.5 H39.5 V273.4 L38.2 272.1 M33.6 279.5 V281.9 M36.4 276.4 L39.5 279.5" fill="none" stroke="#aaa" stroke-width="0.7"/><path d="M30.3 302.6 L36.4 302.4 V296.4 H40.6 L42.7 298.5 V308.3 H32.7 L30.4 306.4 Z" fill="#fff" stroke="#444" stroke-width="1.1" stroke-linejoin="round"/><path d="M32.3 304.2 L33.6 305.5 H39.5 V299.4 L38.2 298.1 M33.6 305.5 V307.9 M36.4 302.4 L39.5 305.5" fill="none" stroke="#aaa" stroke-width="0.7"/><path d="M30.3 328.6 L36.4 328.4 V322.4 H40.6 L42.7 324.5 V334.3 H32.7 L30.4 332.4 Z" fill="#fff" stroke="#444" stroke-width="1.1" stroke-linejoin="round"/><path d="M32.3 330.2 L33.6 331.5 H39.5 V325.4 L38.2 324.1 M33.6 331.5 V333.9 M36.4 328.4 L39.5 331.5" fill="none" stroke="#aaa" stroke-width="0.7"/><path d="M30.3 354.6 L36.4 354.4 V348.4 H40.6 L42.7 350.5 V360.3 H32.7 L30.4 358.4 Z" fill="#fff" stroke="#444" stroke-width="1.1" stroke-linejoin="round"/><path d="M32.3 356.2 L33.6 357.5 H39.5 V351.4 L38.2 350.1 M33.6 357.5 V359.9 M36.4 354.4 L39.5 357.5" fill="none" stroke="#aaa" stroke-width="0.7"/><path d="M10.5 378 L16.5 384 L22.5 378" fill="none" stroke="#333" stroke-width="1.6"/><rect x="190" y="26" width="10" height="802" fill="#f5f6f6"/></svg></div>
<div id="tabs" class="abs"><svg class="abs" style="left:0;top:0" width="75" height="30"><rect x="9" y="6.5" width="16" height="1.2" fill="#666"/><circle cx="16" cy="14.5" r="4.3" fill="none" stroke="#666" stroke-width="1.6"/><path d="M19 17.5 L21.5 20.5" stroke="#666" stroke-width="1.8"/><rect x="21" y="11" width="4" height="1.4" fill="#666"/><rect x="21" y="14" width="4" height="1.4" fill="#666"/><path d="M46.5 14 H60.5 M53.5 7 V21" stroke="#666" stroke-width="2.2"/></svg>
<div class="tab" style="left:75px;width:200px"><svg class="abs" style="left:11px;top:3px" width="22" height="21"><path d="M0.7 5.5 H6.5 L9.5 8.5 V18.6 H3.5 L0.7 15.5 Z M10.1 1 H15.5 L19 4.5 V18.6 H12.5 L10.1 16 Z" fill="#fff" stroke="#222" stroke-width="1.3" stroke-linejoin="round"/><path d="M4.3 8.4 V18.6 M2.8 7 L4.3 8.4 H9 M13.5 4.3 V18.6 M11.8 3 L13.5 4.3 H18.5" fill="none" stroke="#666" stroke-width="0.8"/></svg><span style="left:34px">Base</span></div>
<div class="tab" style="left:277px;width:201px"><svg class="abs" style="left:10px;top:3px" width="22" height="21"><path d="M0.7 5.5 H6.5 L9.5 8.5 V18.6 H3.5 L0.7 15.5 Z M10.1 1 H15.5 L19 4.5 V18.6 H12.5 L10.1 16 Z" fill="#fff" stroke="#222" stroke-width="1.3" stroke-linejoin="round"/><path d="M4.3 8.4 V18.6 M2.8 7 L4.3 8.4 H9 M13.5 4.3 V18.6 M11.8 3 L13.5 4.3 H18.5" fill="none" stroke="#666" stroke-width="0.8"/></svg><span style="left:34.5px">Turntable</span></div>
<div class="tab" style="left:480px;width:200px"><svg class="abs" style="left:9.5px;top:3px" width="22" height="21"><path d="M0.7 5.5 H6.5 L9.5 8.5 V18.6 H3.5 L0.7 15.5 Z M10.1 1 H15.5 L19 4.5 V18.6 H12.5 L10.1 16 Z" fill="#fff" stroke="#222" stroke-width="1.3" stroke-linejoin="round"/><path d="M4.3 8.4 V18.6 M2.8 7 L4.3 8.4 H9 M13.5 4.3 V18.6 M11.8 3 L13.5 4.3 H18.5" fill="none" stroke="#666" stroke-width="0.8"/></svg><span style="left:33.3px">Camera Mount</span></div>
<div class="tab" style="left:682px;width:199px;background:#fff;color:#333;height:28px"><svg class="abs" style="left:0;top:0" width="40" height="26"><path d="M11.1 4.2 H25.5 L28.8 7.75 V21.5 H14.7 L11.1 17.75 Z" fill="#fff" stroke="#222" stroke-width="1.3" stroke-linejoin="round"/><polygon points="12.2,5.3 21.8,5.3 23.8,8.6 23.8,16.7 15.7,16.7 12.2,14.8" fill="#9a9a9a"/><path d="M12.2 5.3 L15.7 8.6 H23.8 M15.7 8.6 V16.7" fill="none" stroke="#777" stroke-width="0.8"/></svg><span style="left:33px">Assembly 1</span><div class="abs" style="left:1px;top:26px;width:197px;height:2px;background:#2d5fa8;border-radius:1px"></div></div></div>
</body></html>
